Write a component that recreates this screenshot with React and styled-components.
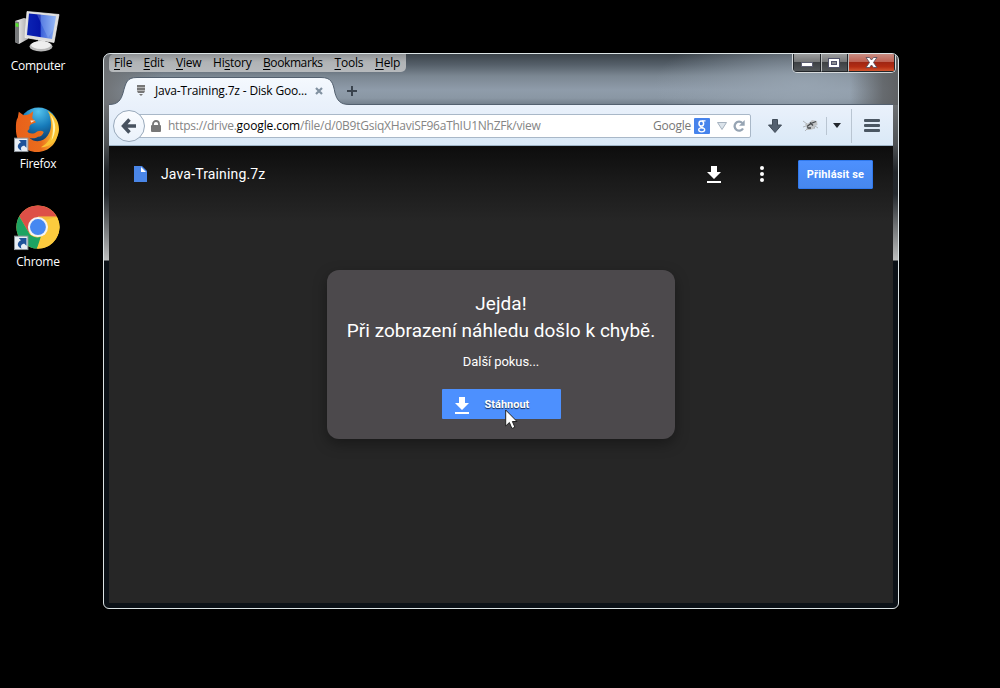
import React from "react";
import styled, { createGlobalStyle } from "styled-components";

const ui = `"Open Sans", "Noto Sans", sans-serif`;
const web = `Roboto, "Liberation Sans", sans-serif`;

const GlobalStyle = createGlobalStyle`
  *, *::before, *::after { box-sizing: border-box; }
  html, body { margin: 0; background: #000; }
  body { width: 1000px; height: 688px; overflow: hidden; }
  svg { display: block; flex: none; }
`;

const Desktop = styled.main`
  position: relative;
  width: 1000px;
  height: 688px;
  background: #000;
  overflow: hidden;
  font-family: ${ui};
`;

const Shortcuts = styled.nav`
  display: flex;
  flex-direction: column;
  width: 76px;
  padding-top: 9px;
`;

const Shortcut = styled.div`
  display: flex;
  flex-direction: column;
  align-items: center;
  height: 98px;
  svg { margin-left: -2px; }
`;

const ShortcutLabel = styled.span`
  margin-top: 2px;
  line-height: 18px;
  font-size: 12px;
  letter-spacing: ${(p) => p.$spacing || 0}px;
  color: #fff;
  white-space: nowrap;
`;

const Window = styled.section`
  position: absolute;
  left: 103px;
  top: 53px;
  width: 796px;
  height: 556px;
  display: flex;
  flex-direction: column;
  border: 1px solid #dce4e6;
  border-radius: 7px 7px 6px 6px;
  padding: 0 5px 5px;
  overflow: hidden;
  background:
    linear-gradient(90deg, rgba(110, 113, 116, 0.95) 0, rgba(110, 113, 116, 0) 60px) 0 0 / 100% 51px no-repeat,
    linear-gradient(270deg, rgba(92, 94, 96, 0.95) 0, rgba(92, 94, 96, 0.8) 15px, rgba(92, 94, 96, 0) 48px) 0 0 / 100% 51px no-repeat,
    radial-gradient(ellipse 150px 60px at 700px 32px, rgba(152, 165, 178, 0.9), rgba(150, 163, 176, 0)) 0 0 / 100% 51px no-repeat,
    linear-gradient(180deg, #3b434a 0, #56606a 11px, #7b8792 22px, #8f9caa 36px, #8a97a4 44px, #717d8a 51px) 0 0 / 100% 51px no-repeat,
    linear-gradient(180deg, #6d7073 51px, #4d5154 90px, #202428 118px, #22272c 140px, #6f7274 172px, #bcbdbd 206px, #0b1117 207px);
`;

const TitleRow = styled.header`
  display: flex;
  justify-content: space-between;
  align-items: flex-start;
  height: 22px;
`;

const MenuBar = styled.div`
  display: flex;
  align-items: center;
  width: 297px;
  height: 18px;
  padding-left: 5px;
  border-radius: 5px 0 5px 4px;
  background: linear-gradient(180deg, #8e9194, #b0b3b5 45%, #b7babd);
`;

const MenuItem = styled.span`
  width: ${(p) => p.$width}px;
  font-size: 12px;
  line-height: 18px;
  letter-spacing: ${(p) => p.$spacing || 0}px;
  color: #000;
  white-space: nowrap;
  u { text-underline-offset: 2px; text-decoration-thickness: 1px; }
`;

const Controls = styled.div`
  display: flex;
  width: 104px;
  height: 19px;
  margin-right: -3px;
  border: 1px solid #d5d9db;
  border-top: 0;
  border-radius: 0 0 5px 5px;
  overflow: hidden;
`;

const Control = styled.span`
  display: flex;
  align-items: center;
  justify-content: center;
  width: ${(p) => p.$width}px;
  border: 1px solid #22262a;
  border-top: 0;
  & + & { border-left-color: #b8bbbc; }
  background: ${(p) =>
    p.$danger
      ? "linear-gradient(180deg, #c98c82 0, #bd5f50 48%, #a02613 50%, #b32c12 75%, #d0552f 100%)"
      : "linear-gradient(180deg, #9b9c9d 0, #747677 48%, #3e4144 50%, #53575a 100%)"};
`;

const MinimizeBar = styled.span`
  width: 12px;
  height: 5px;
  margin-top: 4px;
  border: 1px solid #5b5d70;
  background: #fff;
`;

const TabStrip = styled.div`
  position: relative;
  display: flex;
  align-items: center;
  height: 29px;
  > svg { position: absolute; left: 0; bottom: 0; }
`;

const Tab = styled.div`
  position: relative;
  display: flex;
  align-items: center;
  width: 232px;
  height: 29px;
  padding: 0 0 0 27px;
`;

const TabTitle = styled.span`
  width: 154px;
  margin-left: 9px;
  margin-right: 6px;
  font-size: 12px;
  line-height: 20px;
  letter-spacing: -0.17px;
  color: #000;
  white-space: nowrap;
`;

const NewTab = styled.span`
  margin-left: 6px;
`;

const NavBar = styled.div`
  display: flex;
  flex: none;
  align-items: center;
  height: 41px;
  padding: 1px 0 0 4px;
  background: linear-gradient(180deg, #eaf1fb, #dae9f7);
  border-bottom: 1px solid #9eb4c6;
`;

const BackButton = styled.span`
  position: relative;
  z-index: 1;
  display: flex;
  flex: none;
  align-items: center;
  justify-content: center;
  width: 32px;
  height: 32px;
  border: 1px solid #98a9bb;
  border-radius: 50%;
  background: linear-gradient(180deg, #fafcff, #eaf2fb);
`;

const AddressBar = styled.div`
  display: flex;
  align-items: center;
  width: 614px;
  height: 24px;
  margin-left: -8px;
  padding-left: 13px;
  border: 1px solid #a9b8c8;
  border-radius: 0 2px 2px 0;
  background: #fff;
`;

const Url = styled.span`
  width: 485px;
  margin-left: 7px;
  font-size: 12px;
  line-height: 18px;
  letter-spacing: -0.25px;
  color: #858585;
  white-space: nowrap;
  b { font-weight: 400; color: #000; letter-spacing: -0.1px; }
`;

const EngineName = styled.span`
  width: 41px;
  font-size: 12px;
  line-height: 18px;
  letter-spacing: -0.25px;
  color: #777;
`;

const EngineBadge = styled.span`
  display: flex;
  justify-content: center;
  width: 16px;
  height: 16px;
  margin-right: 7px;
  border-radius: 1px;
  background: #4683ec;
`;

const ToolIcon = styled.span`
  display: flex;
  margin-left: ${(p) => p.$gap}px;
`;

const Divider = styled.span`
  width: 1px;
  height: ${(p) => p.$height}px;
  margin-left: ${(p) => p.$gap}px;
  background: #b9c5d2;
`;

const Page = styled.div`
  display: flex;
  flex: 1;
  flex-direction: column;
  background: linear-gradient(180deg, #0d0d0d 0, #1a1a1a 35px, #262626 75px);
  font-family: ${web};
  color: #fff;
`;

const FileBar = styled.div`
  display: flex;
  align-items: center;
  height: 56px;
  padding: 0 20px 0 25px;
`;

const FileName = styled.h1`
  flex: 1;
  margin: 0 0 0 14px;
  font-size: 14px;
  line-height: 20px;
  font-weight: 400;
  letter-spacing: 0.15px;
`;

const SignIn = styled.button`
  width: 75px;
  height: 29px;
  margin-left: 34px;
  padding: 0;
  border: 1px solid #3079ed;
  border-radius: 1px;
  background: linear-gradient(180deg, #4d90fe, #4787ed);
  color: #fff;
  font: 700 11px/27px ${web};
  letter-spacing: 0.15px;
  white-space: nowrap;
`;

const Dialog = styled.div`
  display: flex;
  flex-direction: column;
  align-items: center;
  width: 348px;
  height: 169px;
  margin: 68px 0 0 218px;
  padding-top: 20px;
  border-radius: 12px;
  background: #4c494c;
  box-shadow: 0 5px 14px rgba(0, 0, 0, 0.35);
`;

const Heading = styled.h2`
  margin: 0;
  font-size: 19px;
  line-height: 27px;
  font-weight: 400;
  letter-spacing: 0.04px;
  text-align: center;
  white-space: nowrap;
`;

const Status = styled.p`
  margin: 9px 0 0;
  font-size: 13px;
  line-height: 18px;
  letter-spacing: -0.08px;
`;

const Download = styled.button`
  display: flex;
  align-items: center;
  width: 119px;
  height: 30px;
  margin-top: 18px;
  padding: 2px 0 0 13px;
  border: 0;
  border-radius: 1px;
  background: #4d90fe;
  color: #fff;
  font: 700 11px/28px ${web};
  text-shadow: 0 1px 1px rgba(0, 0, 0, 0.7);
  span { margin-left: 16px; }
`;

const Pointer = styled.span`
  position: absolute;
  left: 505px;
  top: 409px;
`;

const ShortcutArrow = () => (
  <g>
    <rect x=".5" y="32.5" width="14" height="14" fill="#e8eef5" stroke="#8d949b" />
    <path d="M5 34.500h8v8l-2.500-2.400c-3 1-4 2.600-2.500 5.400-4.500-1.500-5.800-5.800-.8-8.700z" fill="#1e5299" />
  </g>
);

const ComputerIcon = () => (
  <svg width="48" height="46" viewBox="0 0 48 46">
    <defs>
      <linearGradient id="screen" x1="0" x2="1"><stop offset="0" stopColor="#0b23b4" /><stop offset=".45" stopColor="#0415a8" /><stop offset=".5" stopColor="#3d63da" /><stop offset="1" stopColor="#8fb3f4" /></linearGradient>
      <linearGradient id="shell" x1="0" x2="1"><stop offset="0" stopColor="#f6f6f6" /><stop offset="1" stopColor="#aaa" /></linearGradient>
    </defs>
    <path d="M2 12l9-3 4 1v20L6 35l-4-2z" fill="url(#shell)" />
    <path d="M2 12l4 1v22l-4-2z" fill="#77797b" />
    <path d="M2.500 14l3 .5v3.500l-3-.5z" fill="#56e02d" />
    <path d="M25 29l7 1v7h-7z" fill="#a7a7a7" />
    <ellipse cx="28" cy="37.500" rx="11.500" ry="5" fill="#b9b9b9" />
    <ellipse cx="28" cy="36" rx="10" ry="4" fill="#eee" />
    <path d="M14 2.500l32 3-5 28-29-5z" fill="#dedede" stroke="#f8f8f8" strokeWidth=".7" />
    <path d="M16 4.500L43 7.200l-4 22.800-25-4z" fill="url(#screen)" />
    <path d="M24 5.500l19 2-1.500 11-6.500 10.500z" fill="#a9c8fa" opacity=".28" />
  </svg>
);

const FirefoxIcon = () => (
  <svg width="48" height="46" viewBox="0 0 48 48">
    <defs>
      <radialGradient id="globe" cx=".5" cy=".1" r=".8"><stop offset="0" stopColor="#53c3ee" /><stop offset=".5" stopColor="#167ab9" /><stop offset="1" stopColor="#10345f" /></radialGradient>
      <linearGradient id="fox" x1="0" x2="1"><stop offset="0" stopColor="#e8601a" /><stop offset=".6" stopColor="#ea6d1c" /><stop offset="1" stopColor="#ffd13a" /></linearGradient>
    </defs>
    <circle cx="25.500" cy="21" r="20.500" fill="url(#globe)" />
    <path d="M5 5l5 3.500c2 0 4-.5 6-1l4-3-1 7 4 4.500-5 2c-2 1-2 3-2 5l-2 2c1 3 5 3 8 2 3-2 6-3 9-1-1 3-3 5-6 5-3 2-6 2-9 1 6 6 15 4 19-2 5-7 4-15 2-22 5 4 9 9 9 16 0 13-9 23-22 23S2 37 2 23c0-5 0-9 2-12z" fill="url(#fox)" />
    <path d="M35 4c10 6 15 17 10 27-4 8-11 11-17 11 9-5 13-13 12-22-.3-6-2-11-5-16z" fill="#fbc332" />
    <path d="M38 8c7 8 6 19 1 27 2-8 3-17-1-27z" fill="#fff4ae" />
    <path d="M17 14h5l-4 2.500z" fill="#fbe2cf" />
    <ShortcutArrow />
  </svg>
);

const ChromeIcon = () => (
  <svg width="48" height="46" viewBox="0 0 48 48">
    <circle cx="25" cy="23" r="22.500" fill="#fccb3e" />
    <path d="M5.500 11.800A22.500 22.500 0 0 1 44.500 12H25v11l-9.500 6z" fill="#dd5047" />
    <path d="M5.500 11.800l10 17.200c2 4 8 6 12.500 4l-4 12.500A22.500 22.500 0 0 1 5.500 11.800z" fill="#1da362" />
    <path d="M25 12.500h19.800A22.500 22.500 0 0 1 23.800 45.500L34.500 28z" fill="#fccb3e" />
    <path d="M25 12.500h19.800l-16 4z" fill="#e6a936" opacity=".45" />
    <circle cx="25" cy="23" r="10.500" fill="#f3f3f3" />
    <circle cx="25" cy="23" r="8.300" fill="#4688f1" />
    <ShortcutArrow />
  </svg>
);

const DownloadGlyph = () => (
  <svg width="14" height="17" viewBox="0 0 14 17" fill="#fff">
    <path d="M4 0h6v6h4l-7 7-7-7h4zM0 15h14v2H0z" />
  </svg>
);

const menus = [
  ["F", "ile", "", 29.5], ["E", "dit", "", 32.5], ["V", "iew", "", 37],
  ["s", "tory", "Hi", 50], ["B", "ookmarks", "", 71.5], ["T", "ools", "", 40.5], ["H", "elp", "", 30],
];

export default function App() {
  return (
    <Desktop>
      <GlobalStyle />
      <Shortcuts>
        <Shortcut><ComputerIcon /><ShortcutLabel $spacing={-0.25}>Computer</ShortcutLabel></Shortcut>
        <Shortcut><FirefoxIcon /><ShortcutLabel $spacing={-0.3}>Firefox</ShortcutLabel></Shortcut>
        <Shortcut><ChromeIcon /><ShortcutLabel $spacing={-0.25}>Chrome</ShortcutLabel></Shortcut>
      </Shortcuts>

      <Window>
        <TitleRow>
          <MenuBar>
            {menus.map(([key, rest, lead, width]) => (
              <MenuItem key={rest} $width={width} $spacing={rest === "ookmarks" ? -0.4 : -0.2}>{lead}<u>{key}</u>{rest}</MenuItem>
            ))}
          </MenuBar>
          <Controls>
            <Control $width={28}>
              <MinimizeBar />
            </Control>
            <Control $width={27}>
              <svg width="13" height="10"><rect x=".5" y=".5" width="11" height="9" fill="#fff" stroke="#50526a" /><rect x="3.500" y="3.500" width="5" height="3" fill="#8b8d92" stroke="#50526a" /></svg>
            </Control>
            <Control $width={47} $danger>
              <svg width="13" height="11" viewBox="0 0 13 11"><path d="M1 .500h3.500l2 2.500 2-2.500H12L8.500 5.500l3.500 5H8.500l-2-2.500-2 2.500H1l3.500-5z" fill="#fff" stroke="#594f5d" strokeWidth=".9" /></svg>
            </Control>
          </Controls>
        </TitleRow>

        <TabStrip>
          <svg width="784" height="29" viewBox="0 0 784 29">
            <defs><linearGradient id="tab" x1="0" y1="0" x2="0" y2="1"><stop offset="0" stopColor="#f5f9fe" /><stop offset="1" stopColor="#e9f1fb" /></linearGradient></defs>
            <path d="M0 28.500C9 28.500 12 24 14 17 17 6 18 1.500 28 1.500H212C222 1.500 224 6 226 17 228 24 231 28.500 240 28.500V29H0z" fill="url(#tab)" />
            <path d="M0 28.500C9 28.500 12 24 14 17 17 6 18 1.500 28 1.500H212C222 1.500 224 6 226 17 228 24 231 28.500 240 28.500H784" fill="none" stroke="#53606f" strokeWidth="1" />
          </svg>
          <Tab>
            <svg width="10" height="11"><path d="M1 0h8v2H1zM1 3h8v2H1zM1 6h8L8 8H2zM3 9h4l-2 2z" fill="#777" /><path d="M1 2h8v1H1zM1 5h8v1H1z" fill="#b5b5b5" /></svg>
            <TabTitle>Java-Training.7z - Disk Goo...</TabTitle>
            <svg width="8" height="8"><path d="M1 1l6 6M7 1L1 7" stroke="#8191a0" strokeWidth="2.200" /></svg>
          </Tab>
          <NewTab>
            <svg width="11" height="11"><path d="M5 1v10M0 6h10" stroke="#3a434d" strokeWidth="2" /></svg>
          </NewTab>
        </TabStrip>

        <NavBar>
          <BackButton>
            <svg width="16" height="16" viewBox="0 0 16 16"><path d="M8.500 1.500L2.500 8l6 6.500M3 8H15" fill="none" stroke="#47525f" strokeWidth="3.500" /></svg>
          </BackButton>
          <AddressBar>
            <svg width="10" height="12"><path d="M2 6V4a3 3 0 0 1 6 0v2" fill="none" stroke="#777" strokeWidth="1.800" /><rect y="5" width="10" height="7" rx="1" fill="#777" /></svg>
            <Url>https://drive.<b>google.com</b>/file/d/0B9tGsiqXHaviSF96aThIU1NhZFk/view</Url>
            <EngineName>Google</EngineName>
            <EngineBadge>
              <svg width="16" height="16" viewBox="0 0 16 16" fill="none" stroke="#fff"><ellipse cx="7.300" cy="5.500" rx="2.300" ry="2.600" strokeWidth="1.500" /><ellipse cx="7.700" cy="11.800" rx="3" ry="2" strokeWidth="1.300" /><path d="M8 2.800h3.500M7 8c-1.500 1 .5 1.400 2.500 2" strokeWidth="1.200" /></svg>
            </EngineBadge>
            <svg width="10" height="8"><path d="M.5.500h9L5 7.500z" fill="#dbe3ea" stroke="#a6b2bf" /></svg>
            <ToolIcon $gap={6}>
              <svg width="12" height="12"><path d="M9.300 3A4.500 4.500 0 1 0 10 8.500" fill="none" stroke="#96a4b3" strokeWidth="2.300" /><path d="M6 5.700h5.700V0z" fill="#96a4b3" /></svg>
            </ToolIcon>
          </AddressBar>
          <ToolIcon $gap={17}>
            <svg width="14" height="14"><path d="M4.500.500h5v5.500h4L7 13.500.500 6h4z" fill="#536070" stroke="#414c59" /></svg>
          </ToolIcon>
          <ToolIcon $gap={21}>
            <svg width="15" height="13" viewBox="0 0 15 13"><path d="M2 5l4-1 3-3 5 1 .5 4-3 1-1 3-4 1-3 0 0-3z" fill="#c2c4c6" /><path d="M4 7.500l4-3 5-2M7 3.500l3 3M4 9l4 0" stroke="#45494d" strokeWidth="1.300" fill="none" /><path d="M0 2l4 3M0 8l3-1M2 12l3-3M11 10l1-3 3 2" stroke="#a2a6aa" strokeWidth=".8" fill="none" /></svg>
          </ToolIcon>
          <Divider $height={18} $gap={8} />
          <ToolIcon $gap={6}><svg width="8" height="5"><path d="M0 0h8L4 5z" fill="#22272d" /></svg></ToolIcon>
          <Divider $height={34} $gap={10} />
          <ToolIcon $gap={12}>
            <svg width="16" height="13" fill="#4b5763"><rect width="16" height="3" rx="1" /><rect y="5" width="16" height="3" rx="1" /><rect y="10" width="16" height="3" rx="1" /></svg>
          </ToolIcon>
        </NavBar>

        <Page>
          <FileBar>
            <svg width="13" height="16"><path d="M0 0h8l5 5v11H0z" fill="#4a86e8" /><path d="M7 1l5 5H7z" fill="#fff" /></svg>
            <FileName>Java-Training.7z</FileName>
            <DownloadGlyph />
            <ToolIcon $gap={39}>
              <svg width="4" height="16" fill="#fff"><circle cx="2" cy="2" r="2" /><circle cx="2" cy="8" r="2" /><circle cx="2" cy="14" r="2" /></svg>
            </ToolIcon>
            <SignIn>Přihlásit se</SignIn>
          </FileBar>
          <Dialog>
            <Heading>Jejda!</Heading>
            <Heading>Při zobrazení náhledu došlo k chybě.</Heading>
            <Status>Další pokus...</Status>
            <Download><DownloadGlyph /><span>Stáhnout</span></Download>
          </Dialog>
        </Page>
      </Window>

      <Pointer>
        <svg width="14" height="22" viewBox="0 0 14 22"><path d="M.7 1v16l3.700-3.500 2.500 6 3-1.300-2.500-5.700H12z" fill="#fff" stroke="#222" /></svg>
      </Pointer>
    </Desktop>
  );
}
